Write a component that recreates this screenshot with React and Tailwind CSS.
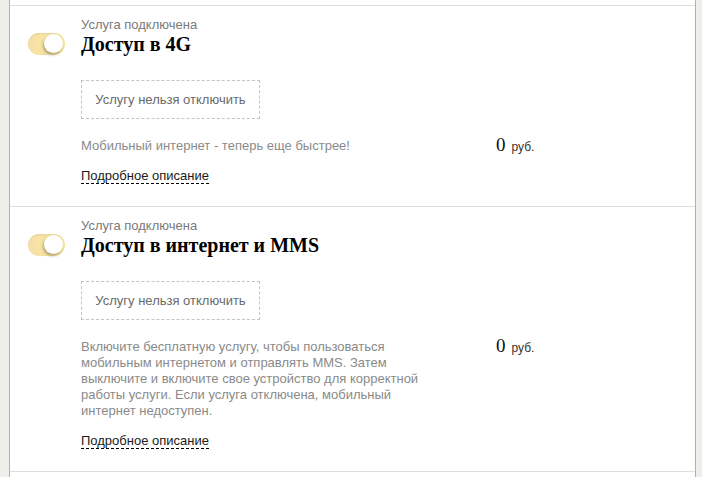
import React from 'react';

const services = [
  {
    id: '4g',
    title: 'Доступ в 4G',
    description: 'Мобильный интернет - теперь еще быстрее!',
    price: '0',
  },
  {
    id: 'mms',
    title: 'Доступ в интернет и MMS',
    description:
      'Включите бесплатную услугу, чтобы пользоваться мобильным интернетом и отправлять MMS. Затем выключите и включите свое устройство для корректной работы услуги. Если услуга отключена, мобильный интернет недоступен.',
    price: '0',
  },
];

function Toggle() {
  return (
    <div className="relative w-[37px] h-[22px] rounded-full bg-gradient-to-r from-[#f4e0a8] to-[#fde99b] shadow-[inset_0_1px_2px_rgba(0,0,0,0.08)]">
      <div className="absolute right-[2px] top-[1px] w-[19px] h-[19px] rounded-full bg-white shadow-[-1px_2px_3px_rgba(0,0,0,0.3)]" />
    </div>
  );
}

function ServiceRow({ service }) {
  return (
    <div className="border-t border-[#dedede] pt-[12px] pb-[22px] pl-[18px] flex">
      {/* switch */}
      <div className="w-[37px] mt-[15px] shrink-0">
        <Toggle />
      </div>

      <div className="ml-[16px] flex-1">
        <p className="text-[13px] leading-[14px] text-[#7a7a7a]">Услуга подключена</p>
        <h2 className="font-['Liberation_Serif',serif] font-bold text-[20px] leading-[24px] text-black">
          {service.title}
        </h2>

        <div className="mt-[24px] w-[179px] h-[39px] border border-dashed border-[#c4c4c4] flex items-center justify-center text-[13px] text-[#6a6a6a]">
          Услугу нельзя отключить
        </div>

        <div className="mt-[19px] flex items-start">
          <div className="w-[415px] shrink-0">
            <p className="w-[345px] text-[13px] leading-[16px] text-[#8a8a8a]">{service.description}</p>
          </div>
          <div className="flex items-baseline gap-[6px] -mt-[3px] h-[16px]">
            <span className="font-['Liberation_Serif',serif] text-[19px] leading-[20px] text-[#111]">{service.price}</span>
            <span className="text-[12px] leading-[20px] text-[#333]">руб.</span>
          </div>
        </div>

        <div className="mt-[15px] flex">
          <a href="#" className="block text-[13px] leading-[14px] text-[#1a1a1a] border-b border-dashed border-black">
            Подробное описание
          </a>
        </div>
      </div>
    </div>
  );
}

export default function App() {
  return (
    <div className="h-screen overflow-hidden bg-[#efeeea] font-['Liberation_Sans',Arial,sans-serif]">
      <div className="ml-[9px] w-[687px] h-full bg-white border-l border-r border-[#b0b0b0] pt-[5px]">
        {services.map(service => (
          <ServiceRow key={service.id} service={service} />
        ))}
        <div className="border-t border-[#dedede] h-[20px]" />
      </div>
    </div>
  );
}
